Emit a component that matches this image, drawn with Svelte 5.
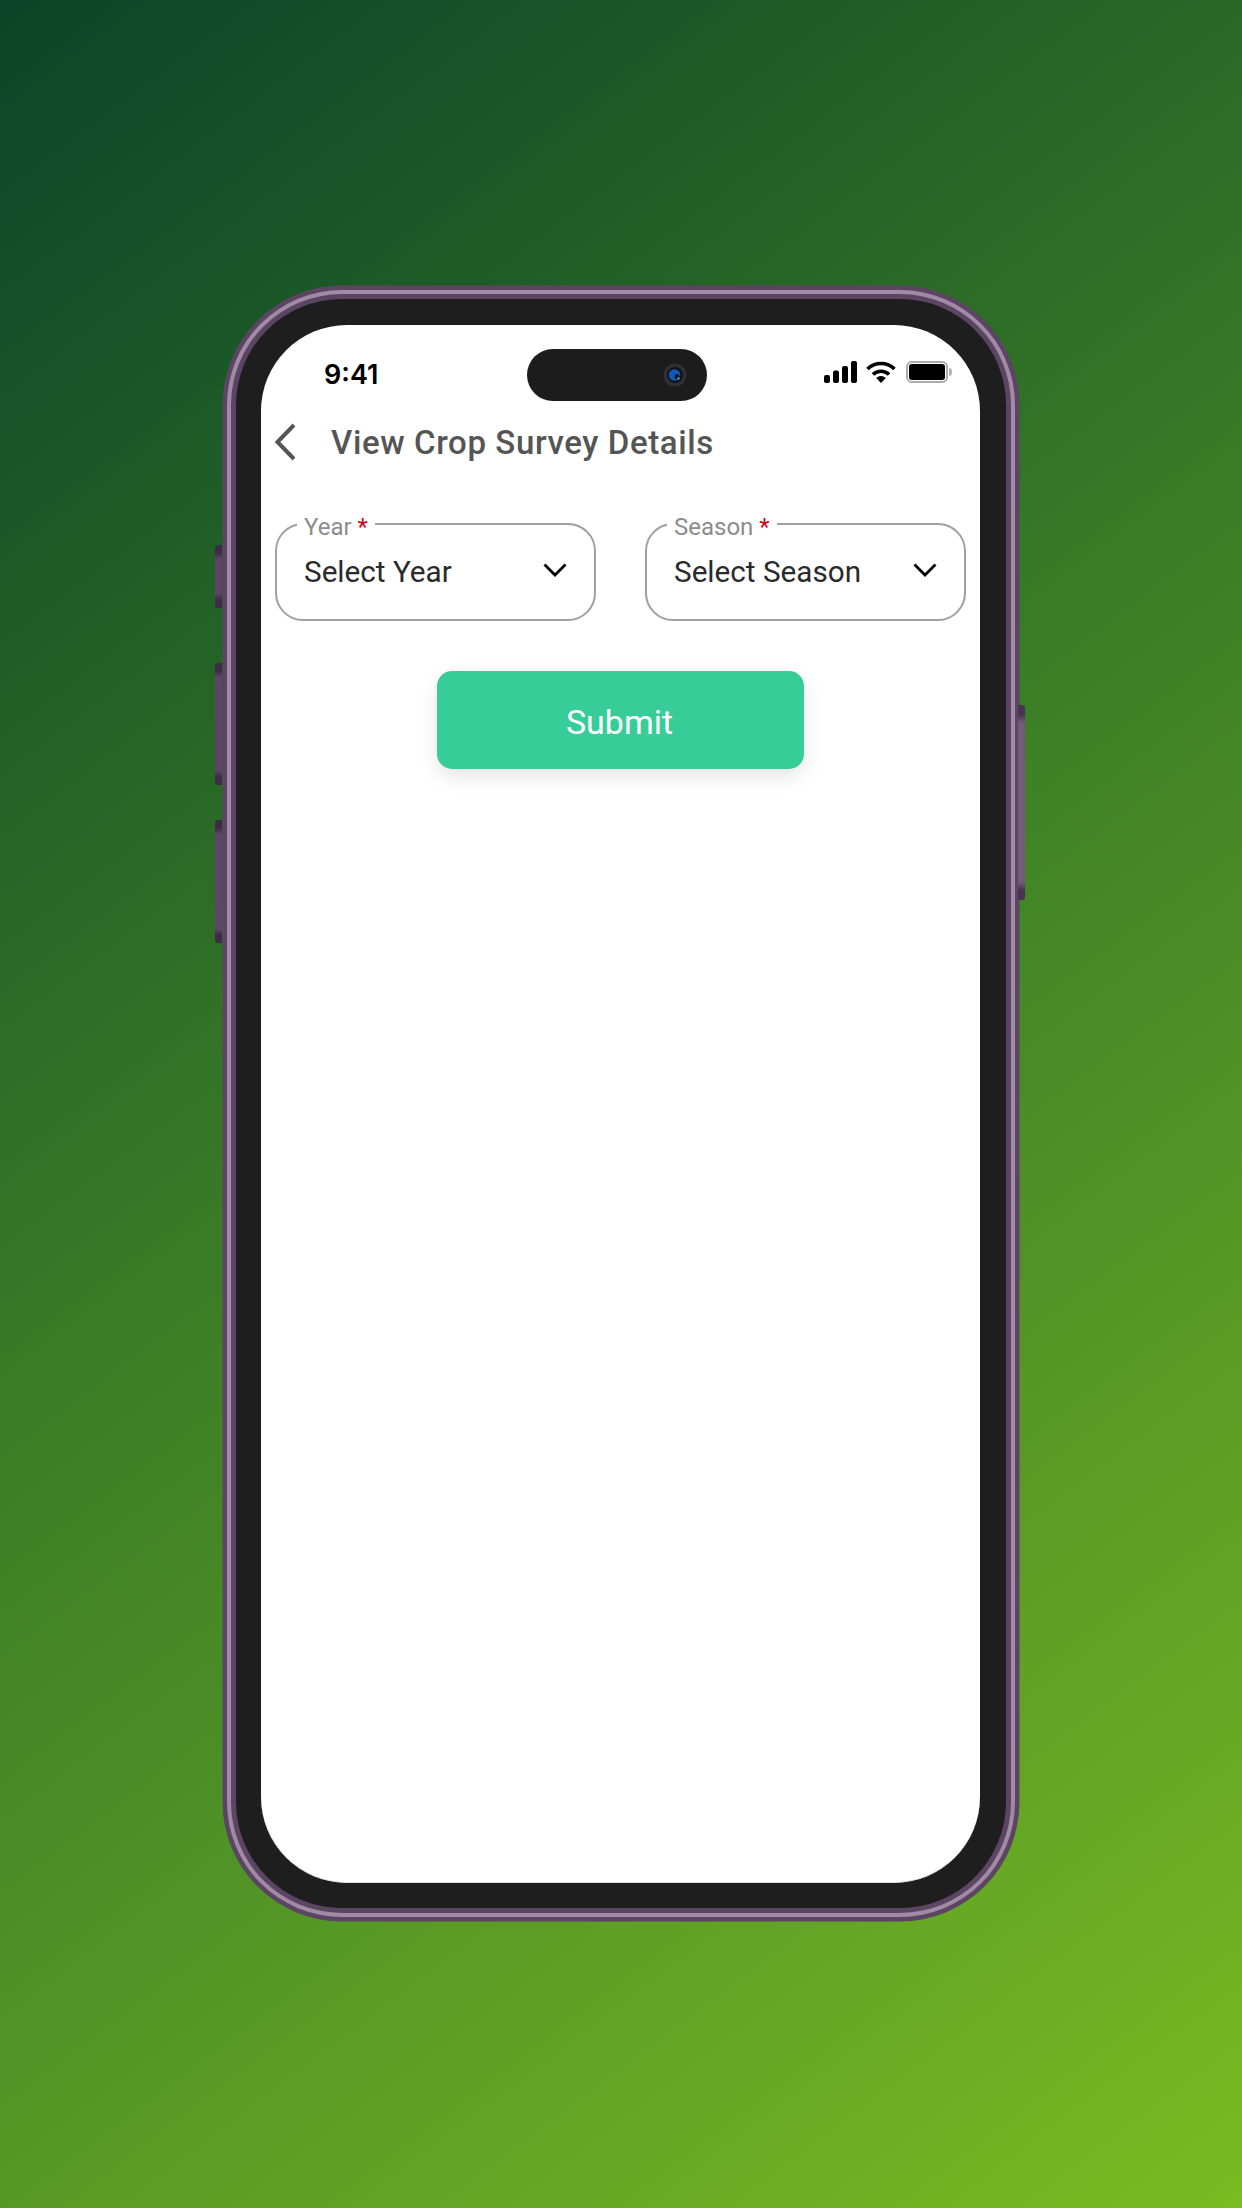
<script>
  const fields = [
    { label: 'Year', placeholder: 'Select Year' },
    { label: 'Season', placeholder: 'Select Season' }
  ];
</script>

<main class="page">
  <div class="phone">
    <span class="key key-mute"></span>
    <span class="key key-up"></span>
    <span class="key key-down"></span>
    <span class="key key-power"></span>
    <div class="screen">
      <div class="status">
        <span class="time">9:41</span>
        <div class="island">
          <svg class="lens" viewBox="0 0 24 24" aria-hidden="true">
            <circle cx="12" cy="12" r="11.5" fill="#303034" />
            <circle cx="12" cy="12" r="8" fill="#111318" />
            <circle cx="11.5" cy="12" r="5.8" fill="#0f5ab8" />
            <circle cx="14" cy="13.5" r="2.6" fill="#0a1a30" />
            <circle cx="15.5" cy="15.5" r="1" fill="#b9c6d6" />
          </svg>
        </div>
        <div class="indicators">
          <svg class="signal" viewBox="0 0 33 22" aria-hidden="true">
            <rect x="0" y="14" width="6" height="8" rx="2" />
            <rect x="9" y="9.5" width="6" height="12.5" rx="2" />
            <rect x="18" y="5" width="6" height="17" rx="2" />
            <rect x="27" y="0" width="6" height="22" rx="2" />
          </svg>
          <svg class="wifi" viewBox="0 0 30 22" aria-hidden="true">
            <path d="M1.5 8 A19.5 19.5 0 0 1 28.5 8" fill="none" stroke="#000" stroke-width="3.6" />
            <path d="M7 13.5 A11.6 11.6 0 0 1 23 13.5" fill="none" stroke="#000" stroke-width="3.6" />
            <path d="M10.2 17 L15 22 L19.8 17 A7 7 0 0 0 10.2 17 Z" fill="#000" />
          </svg>
          <div class="battery">
            <span class="cell"><span class="charge"></span></span>
            <span class="tip"></span>
          </div>
        </div>
      </div>

      <header class="bar">
        <svg class="back" viewBox="0 0 23 38" aria-hidden="true">
          <path d="M20 2 L3.5 19 L20 36" fill="none" stroke="#555" stroke-width="4" />
        </svg>
        <h1>View Crop Survey Details</h1>
      </header>

      <form class="form" on:submit|preventDefault>
        <div class="row">
          {#each fields as f}
            <fieldset class="field">
              <legend>{f.label} <b>*</b></legend>
              <div class="control">
                <span>{f.placeholder}</span>
                <svg class="caret" viewBox="0 0 24 14" aria-hidden="true">
                  <path d="M1.5 1.5 L12 12 L22.5 1.5" fill="none" stroke="#000" stroke-width="2.8" />
                </svg>
              </div>
            </fieldset>
          {/each}
        </div>
        <button class="submit" type="submit">Submit</button>
      </form>
    </div>
  </div>
</main>

<style>
  :global(body) {
    margin: 0;
  }
  .page {
    width: 1242px;
    height: 2208px;
    box-sizing: border-box;
    padding: 299px 0 0 236px;
    background: linear-gradient(143deg, #0a4428 0%, #1e5c27 20%, #3f8226 50%, #599b25 72%, #7aba22 100%);
    overflow: hidden;
  }
  .phone {
    position: relative;
    width: 770px;
    height: 1609px;
    box-sizing: border-box;
    padding: 26px 26px 25px 25px;
    border-radius: 106px;
    background: #1e1e1e;
    box-shadow: 0 0 0 5px #5b4562, 0 0 0 9px #a08aa6, 0 0 0 13.5px #5b4562;
  }
  .key {
    position: absolute;
    width: 7px;
    border-radius: 3px 0 0 3px;
    background: linear-gradient(#3f2a48 0 8px, #5f4368 14px calc(100% - 14px), #3f2a48 calc(100% - 8px));
  }
  .key-mute { left: -21px; top: 246px; height: 63px; }
  .key-up { left: -21px; top: 364px; height: 122px; }
  .key-down { left: -21px; top: 521px; height: 123px; }
  .key-power {
    right: -19px;
    top: 406px;
    height: 195px;
    border-radius: 0 3px 3px 0;
    background: linear-gradient(#4a3350 0 10px, #755a7c 18px calc(100% - 18px), #4a3350 calc(100% - 10px));
  }
  .screen {
    height: 100%;
    box-sizing: border-box;
    border-radius: 86px;
    background: #fff;
    overflow: hidden;
    font-family: Roboto, sans-serif;
    border-bottom: 1px solid #e4e4e4;
  }
  .status {
    display: flex;
    align-items: flex-start;
    height: 88px;
    box-sizing: border-box;
    padding-top: 24px;
  }
  .time {
    margin: 10px 0 0 63px;
    width: 203px;
    font: 600 27px/32px Inter, sans-serif;
    color: #000;
  }
  .island {
    width: 180px;
    height: 52px;
    border-radius: 26px;
    background: #1c1c1c;
    display: flex;
    align-items: center;
    justify-content: flex-end;
    padding-right: 20px;
    box-sizing: border-box;
  }
  .lens {
    width: 24px;
    height: 24px;
  }
  .indicators {
    display: flex;
    align-items: flex-start;
    margin: 12px 0 0 117px;
    gap: 9px;
  }
  .signal {
    width: 33px;
    height: 22px;
    fill: #000;
  }
  .wifi {
    width: 30px;
    height: 22px;
  }
  .battery {
    display: flex;
    align-items: center;
    margin-left: 1px;
  }
  .cell {
    width: 42px;
    height: 22px;
    box-sizing: border-box;
    padding: 1px;
    border: 2px solid #ababab;
    border-radius: 6px;
    display: flex;
  }
  .charge {
    flex: 1;
    background: #000;
    border-radius: 3px;
  }
  .tip {
    width: 3px;
    height: 8px;
    margin-left: 1px;
    border-radius: 0 3px 3px 0;
    background: #b5b5b5;
  }
  .bar {
    display: flex;
    align-items: center;
    height: 60px;
    padding-left: 13px;
    gap: 34px;
  }
  .back {
    width: 23px;
    height: 38px;
    margin-top: -2px;
  }
  h1 {
    margin: 0;
    font: 500 33px/40px Roboto, sans-serif;
    letter-spacing: 0.6px;
    color: #555;
  }
  .form {
    display: flex;
    flex-direction: column;
    align-items: center;
    padding: 0 14px;
  }
  .row {
    display: flex;
    justify-content: space-between;
    width: 100%;
    margin-top: 34px;
  }
  .field {
    width: 321px;
    height: 114px;
    box-sizing: border-box;
    margin: 0;
    padding: 0 25px 0 27px;
    border: 2px solid #a0a0a0;
    border-radius: 28px;
  }
  legend {
    padding: 6px 7px 0;
    margin-left: -7px;
    font-size: 24px;
    line-height: 28px;
    color: #8c8c8c;
  }
  legend b {
    font-weight: 400;
    color: #d0021b;
  }
  .control {
    display: flex;
    align-items: center;
    justify-content: space-between;
    height: 44px;
    margin-top: 8px;
    font-size: 29.7px;
    color: #2a2a2a;
  }
  .caret {
    width: 24px;
    height: 14px;
    margin-right: 2px;
    margin-top: -2px;
  }
  .submit {
    width: 367px;
    height: 98px;
    margin-top: 50px;
    padding: 3px 2px 0 0;
    border: 0;
    border-radius: 15px;
    background: #36cd98;
    color: #fff;
    font: 400 34px/42px Roboto, sans-serif;
    box-shadow: 0 8px 20px rgba(0, 0, 0, 0.1);
  }
</style>
